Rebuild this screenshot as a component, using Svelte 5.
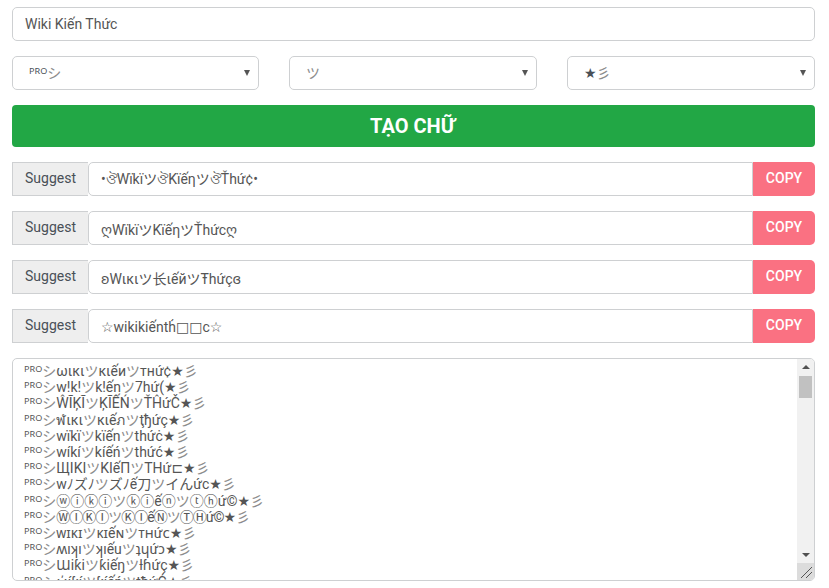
<script>
  const suggestions = [
    '•ঔWïkïツঔKïếηツঔŤhứ¢•',
    'ღWïkïツKïếηツŤhứcღ',
    'ʚWιкιツ长ιếйツŦhứçɞ',
    '☆wikikiếnth̉□□c☆'
  ];
  const lines = [
    'ωιкιツкιếиツтнứ¢',
    'w!k!ツk!ếnツ7hứ(',
    'ŴĨĶĨツĶĨẾŃツŤĤứČ',
    'ฬιкιツкιếภツţђứç',
    'wïkïツkïếnツthứċ',
    'wíkíツkíếńツthứć',
    'ЩIKIツKIếПツTHứ⊏',
    'wﾉズﾉツズﾉế刀ツイんức',
    'ⓦⓘⓚⓘツⓚⓘếⓝツⓣⓗứ©',
    'ⓌⒾⓀⒾツⓀⒾếⓃツⓉⒽứ©',
    'ᴡɪᴋɪツᴋɪếɴツᴛʜứᴄ',
    'ʍıʞıツʞıếuツʇɥứɔ',
    'Ɯiƙiツƙiếŋツƚɦứç',
    'ώíƙíツƙíếńツŧħứĆ'
  ];
</script>

<main class="page">
  <input class="field name" value="Wiki Kiến Thức" />

  <div class="selects">
    <div class="select"><span>ᴾᴿᴼ<span class="thin">シ</span></span><i></i></div>
    <div class="select"><span class="thin">ツ</span><i></i></div>
    <div class="select"><span>★<span class="thin">彡</span></span><i></i></div>
  </div>

  <button class="create">TẠO CHỮ</button>

  {#each suggestions as s}
    <div class="row">
      <span class="addon">Suggest</span>
      <input class="field grow" value={s} />
      <button class="copy">COPY</button>
    </div>
  {/each}

  <div class="area">
    <div class="text">
      {#each lines as l, n}
        <div class="line">ᴾᴿᴼ<span class="thin">シ</span><span class:tight={n === 9}>{#each l.split('ツ') as part, i}{#if i > 0}<span class="thin">ツ</span>{/if}{part}{/each}</span>★<span class="thin">彡</span></div>
      {/each}
    </div>
    <div class="scroll">
      <b class="up"></b>
      <div class="track"><div class="thumb"></div></div>
      <b class="down"></b>
      <div class="grip">
        <svg width="15" height="15" viewBox="0 0 15 15"><path d="M3 14 14 3M8 14l6-6" stroke="#555" fill="none"/></svg>
      </div>
    </div>
  </div>
</main>

<style>
  :global(body) { margin: 0; background: #fff; }
  .page {
    width: 803px;
    padding: 7px 14px 0 12px;
    display: flex;
    flex-direction: column;
    gap: 15px;
    font: 14px/1.43 Roboto, "Noto Sans", "DejaVu Sans", "Noto Sans CJK JP", sans-serif;
    color: #495057;
  }
  .thin { color: #8c8c8c; }
  .field {
    box-sizing: border-box;
    height: 34px;
    border: 1px solid #ced0d2;
    border-radius: 5px;
    padding: 0 12px;
    font: inherit;
    color: #555;
    background: #fff;
    outline: none;
    min-width: 0;
  }
  .selects {
    display: grid;
    grid-template-columns: 247px 248px 248px;
    gap: 30px;
  }
  .select {
    box-sizing: border-box;
    height: 34px;
    border: 1px solid #ced0d2;
    border-radius: 5px;
    padding: 0 8px 0 16px;
    display: flex;
    align-items: center;
    justify-content: space-between;
  }
  .select i {
    border-left: 3px solid transparent;
    border-right: 3px solid transparent;
    border-top: 6px solid #555;
  }
  .create {
    height: 42px;
    border: 0;
    border-radius: 4px;
    background: #22a745;
    color: #fff;
    font: 700 20px Roboto, sans-serif;
    padding: 0 2px 0 0;
  }
  .row {
    display: flex;
    height: 34px;
  }
  .addon {
    box-sizing: border-box;
    width: 76px;
    background: #eee;
    border: 1px solid #ced0d2;
    border-right: 0;
    display: flex;
    align-items: center;
    justify-content: center;
    padding-bottom: 2px;
  }
  .grow {
    flex: 1;
    border-radius: 5px 0 0 5px;
    height: 34px;
    padding-top: 2px;
  }
  .copy {
    width: 62px;
    border: 0;
    border-radius: 0 5px 5px 0;
    background: #fa7182;
    color: #fff;
    font: 500 14px Roboto, sans-serif;
    padding: 0 0 3px;
  }
  .area {
    box-sizing: border-box;
    height: 223px;
    border: 1px solid #ced0d2;
    border-radius: 5px;
    display: flex;
    overflow: hidden;
  }
  .text {
    flex: 1;
    padding: 4px 11px 0;
    overflow: hidden;
  }
  .line {
    line-height: 16.2px;
    font-size: 14px;
    white-space: nowrap;
    color: #555;
  }
  .tight { letter-spacing: -1px; }
  .scroll {
    width: 17px;
    background: #f1f1f1;
    display: flex;
    flex-direction: column;
    align-items: center;
  }
  .up, .down {
    flex: none;
    width: 0;
    border-left: 4px solid transparent;
    border-right: 4px solid transparent;
  }
  .up { border-bottom: 4px solid #505050; margin: 6px 0 7px; }
  .down { border-top: 4px solid #505050; margin: 7px 0 6px; }
  .track { flex: 1; width: 100%; }
  .thumb {
    width: 13px;
    height: 22px;
    margin: 0 auto;
    background: #c1c1c1;
  }
  .grip {
    flex: none;
    width: 100%;
    height: 17px;
    background: #dcdcdc;
  }
  .grip svg { display: block; margin: 1px; }
</style>
